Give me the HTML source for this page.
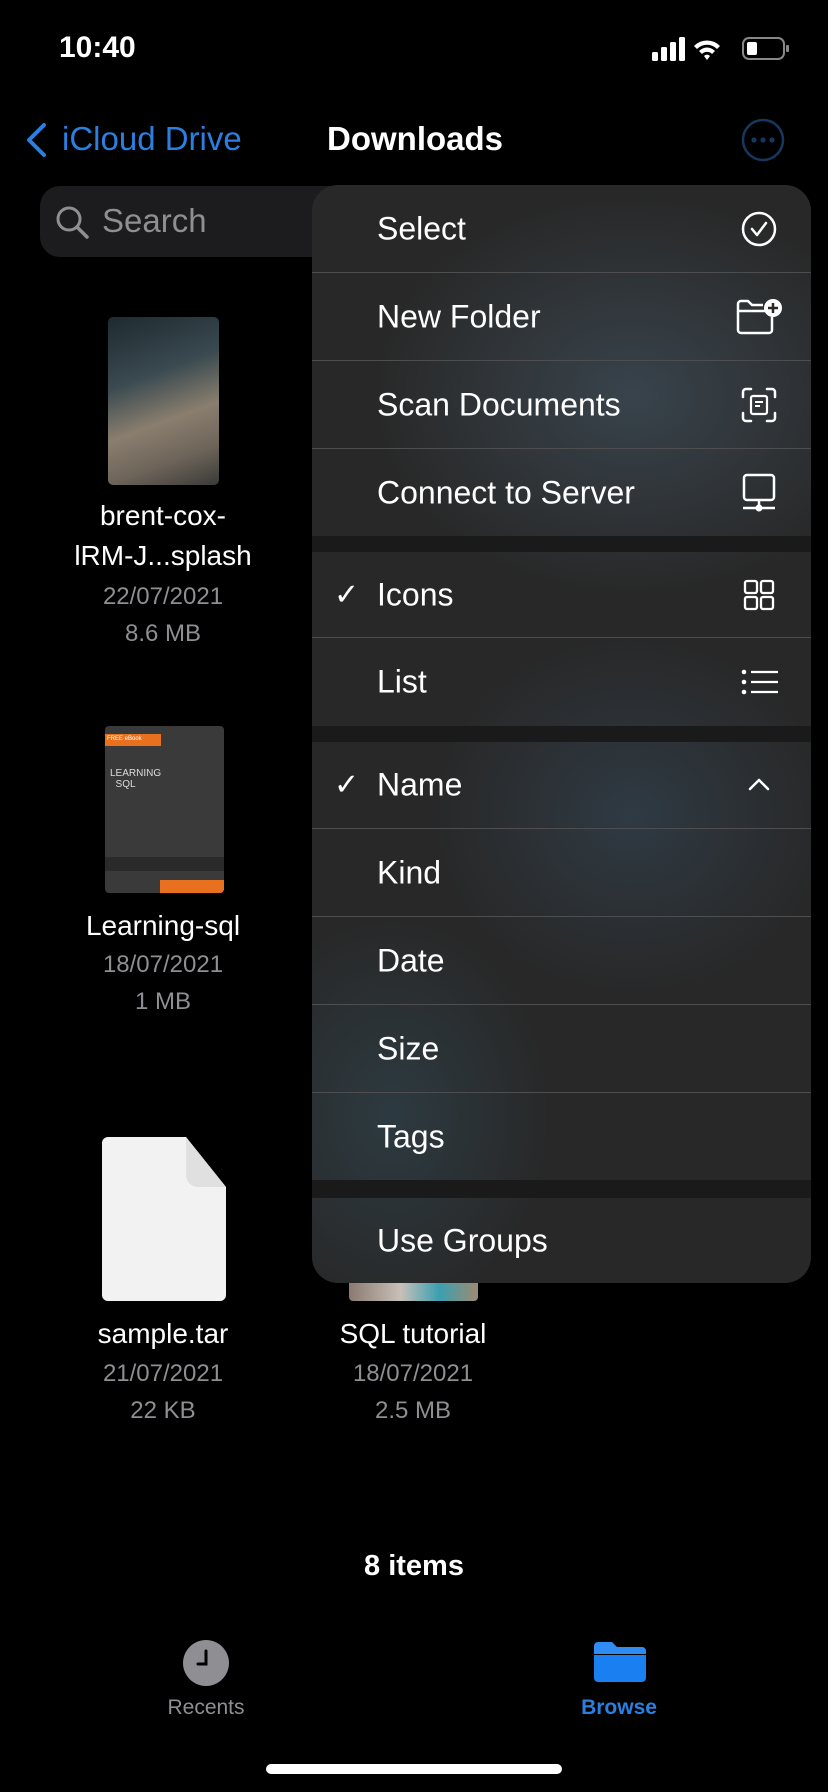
<!DOCTYPE html>
<html><head><meta charset="utf-8"><style>
*{margin:0;padding:0;box-sizing:border-box}
body{width:828px;height:1792px;background:#000;font-family:"Liberation Sans",sans-serif;color:#fff;position:relative;overflow:hidden}
.a{position:absolute}
.c{text-align:center;white-space:nowrap}
.fn{font-size:28px;color:#fff;width:260px}
.fm{font-size:24px;color:#8e8e93;width:260px}
.menu{left:312px;top:185px;width:499px;height:1098px;border-radius:26px;overflow:hidden;background:radial-gradient(ellipse 260px 200px at 320px 210px,rgba(70,90,105,.55),transparent),radial-gradient(ellipse 200px 180px at 320px 630px,rgba(55,80,100,.45),transparent),radial-gradient(ellipse 160px 200px at 80px 930px,rgba(50,80,95,.45),transparent),#282828}
.row{position:absolute;left:0;width:499px;border-bottom:1px solid #4e4e50}
.row span{position:absolute;left:65px;font-size:32px;top:50%;transform:translateY(-50%)}
.gap{position:absolute;left:0;width:499px;background:#1a1a1a}
.ic{position:absolute;left:428px;top:50%;transform:translateY(-50%)}
.row span.ck{left:22px;font-size:30px}
</style></head><body>
<div class="a" style="left:59px;top:31px;font-size:30px;font-weight:bold">10:40</div>
<svg class="a" style="left:652px;top:36px" width="140" height="26" viewBox="0 0 140 26">
<rect x="0" y="16" width="6" height="9" rx="1.5" fill="#fff"/><rect x="9" y="11" width="6" height="14" rx="1.5" fill="#fff"/><rect x="18" y="6" width="6" height="19" rx="1.5" fill="#fff"/><rect x="27" y="1" width="6" height="24" rx="1.5" fill="#fff"/>
<path d="M42 10a18 18 0 0 1 26 0l-3 3a14 14 0 0 0-20 0zM47 15a11 11 0 0 1 16 0l-3 3a7 7 0 0 0-10 0zM52 20a4 4 0 0 1 6 0l-3 4z" fill="#fff"/>
<rect x="91" y="2" width="41" height="21" rx="6" fill="none" stroke="#888" stroke-width="2"/><rect x="95" y="6" width="10" height="13" rx="2" fill="#fff"/><rect x="134" y="9" width="3" height="7" rx="1" fill="#888"/>
</svg>
<svg class="a" style="left:24px;top:122px" width="24" height="36"><path d="M20 3L5 18l15 15" fill="none" stroke="#2a7fe0" stroke-width="4" stroke-linecap="round" stroke-linejoin="round"/></svg>
<div class="a" style="left:62px;top:120px;font-size:33px;color:#2a7fe0">iCloud Drive</div>
<div class="a" style="left:327px;top:120px;font-size:33px;font-weight:bold">Downloads</div>
<svg class="a" style="left:741px;top:118px" width="44" height="44"><circle cx="22" cy="22" r="20" fill="none" stroke="#16385e" stroke-width="2.5"/><circle cx="13" cy="22" r="2.6" fill="#16385e"/><circle cx="22" cy="22" r="2.6" fill="#16385e"/><circle cx="31" cy="22" r="2.6" fill="#16385e"/></svg>
<div class="a" style="left:40px;top:186px;width:320px;height:71px;border-radius:20px;background:#1c1c1e"></div>
<svg class="a" style="left:54px;top:204px" width="38" height="38"><circle cx="15" cy="15" r="11" fill="none" stroke="#8e8e93" stroke-width="3"/><path d="M23 23l10 10" stroke="#8e8e93" stroke-width="3.5" stroke-linecap="round"/></svg>
<div class="a" style="left:102px;top:202px;font-size:33px;color:#8e8e93">Search</div>

<div class="a" style="left:108px;top:317px;width:111px;height:168px;border-radius:5px;background:linear-gradient(160deg,#1e2a30 0%,#3a4a50 35%,#8a7e6e 60%,#6e655a 80%,#3a3a38 100%)"></div>
<div class="a c fn" style="left:33px;top:500px">brent-cox-</div>
<div class="a c fn" style="left:33px;top:540px">lRM-J...splash</div>
<div class="a c fm" style="left:33px;top:583px">22/07/2021</div>
<div class="a c fm" style="left:33px;top:620px">8.6 MB</div>

<div class="a" style="left:105px;top:726px;width:119px;height:167px;border-radius:4px;background:#3a3a3a;overflow:hidden">
<div class="a" style="left:0;top:8px;width:56px;height:12px;background:#e8701e;font-size:6px;padding:2px">FREE eBook</div>
<div class="a" style="left:5px;top:42px;font-size:10px;color:#ddd">LEARNING<br>&nbsp;&nbsp;SQL</div>
<div class="a" style="left:0;top:131px;width:119px;height:14px;background:#2a2a2a"></div>
<div class="a" style="left:55px;top:154px;width:64px;height:13px;background:#e8701e"></div>
</div>
<div class="a c fn" style="left:33px;top:910px">Learning-sql</div>
<div class="a c fm" style="left:33px;top:951px">18/07/2021</div>
<div class="a c fm" style="left:33px;top:988px">1 MB</div>

<svg class="a" style="left:102px;top:1137px" width="124" height="164"><path d="M6 0H84L124 50V158a6 6 0 0 1-6 6H6a6 6 0 0 1-6-6V6a6 6 0 0 1 6-6z" fill="#f2f2f2"/><path d="M84 0V38a12 12 0 0 0 12 12H124z" fill="#e0e0e0"/></svg>
<div class="a c fn" style="left:33px;top:1318px">sample.tar</div>
<div class="a c fm" style="left:33px;top:1360px">21/07/2021</div>
<div class="a c fm" style="left:33px;top:1397px">22 KB</div>

<div class="a" style="left:349px;top:1270px;width:129px;height:31px;border-radius:4px;background:linear-gradient(90deg,#8a7a70,#c8c0b8 40%,#3aa0b0 70%,#a08a70)"></div>
<div class="a c fn" style="left:283px;top:1318px">SQL tutorial</div>
<div class="a c fm" style="left:283px;top:1360px">18/07/2021</div>
<div class="a c fm" style="left:283px;top:1397px">2.5 MB</div>

<div class="a menu">
<div class="row" style="top:0;height:88px"><span>Select</span><svg class="ic" width="38" height="38"><circle cx="19" cy="19" r="16" fill="none" stroke="#fff" stroke-width="2.5"/><path d="M12 19l5 6 9-12" fill="none" stroke="#fff" stroke-width="2.5" stroke-linecap="round" stroke-linejoin="round"/></svg></div>
<div class="row" style="top:88px;height:88px"><span>New Folder</span><svg class="ic" style="left:423px" width="48" height="40"><path d="M3 12V33a3 3 0 0 0 3 3H34a3 3 0 0 0 3-3V20M3 12V7a3 3 0 0 1 3-3H13l4 4H28M3 14H30" fill="none" stroke="#fff" stroke-width="2.5" stroke-linejoin="round"/><circle cx="38" cy="11" r="9" fill="#fff"/><path d="M38 6v10M33 11h10" stroke="#282828" stroke-width="2.5"/></svg></div>
<div class="row" style="top:176px;height:88px"><span>Scan Documents</span><svg class="ic" width="38" height="38"><path d="M3 11V6a3 3 0 0 1 3-3h5M27 3h5a3 3 0 0 1 3 3v5M35 27v5a3 3 0 0 1-3 3h-5M11 35H6a3 3 0 0 1-3-3v-5" fill="none" stroke="#fff" stroke-width="2.5" stroke-linecap="round"/><rect x="11" y="10" width="16" height="18" rx="2" fill="none" stroke="#fff" stroke-width="2.2"/><path d="M15 16h8M15 20h5" stroke="#fff" stroke-width="2"/></svg></div>
<div class="row" style="top:264px;height:87px;border:none"><span>Connect to Server</span><svg class="ic" width="38" height="40"><rect x="4" y="2" width="30" height="25" rx="3" fill="none" stroke="#fff" stroke-width="2.5"/><path d="M19 27v8M3 35h32" stroke="#fff" stroke-width="2.5"/><circle cx="19" cy="35" r="3.5" fill="#fff"/></svg></div>
<div class="gap" style="top:351px;height:16px"></div>
<div class="row" style="top:367px;height:86px"><span class="ck">✓</span><span>Icons</span><svg class="ic" width="38" height="38"><rect x="5" y="5" width="12" height="12" rx="2" fill="none" stroke="#fff" stroke-width="2.3"/><rect x="21" y="5" width="12" height="12" rx="2" fill="none" stroke="#fff" stroke-width="2.3"/><rect x="5" y="21" width="12" height="12" rx="2" fill="none" stroke="#fff" stroke-width="2.3"/><rect x="21" y="21" width="12" height="12" rx="2" fill="none" stroke="#fff" stroke-width="2.3"/></svg></div>
<div class="row" style="top:453px;height:88px;border:none"><span>List</span><svg class="ic" width="40" height="38"><circle cx="4" cy="9" r="2.3" fill="#fff"/><circle cx="4" cy="19" r="2.3" fill="#fff"/><circle cx="4" cy="29" r="2.3" fill="#fff"/><path d="M11 9h27M11 19h27M11 29h27" stroke="#fff" stroke-width="2.3"/></svg></div>
<div class="gap" style="top:541px;height:16px"></div>
<div class="row" style="top:557px;height:87px"><span class="ck">✓</span><span>Name</span><svg class="ic" width="38" height="38"><path d="M10 23l9-9 9 9" fill="none" stroke="#fff" stroke-width="2.5" stroke-linecap="round" stroke-linejoin="round"/></svg></div>
<div class="row" style="top:644px;height:88px"><span>Kind</span></div>
<div class="row" style="top:732px;height:88px"><span>Date</span></div>
<div class="row" style="top:820px;height:88px"><span>Size</span></div>
<div class="row" style="top:908px;height:87px;border:none"><span>Tags</span></div>
<div class="gap" style="top:995px;height:18px"></div>
<div class="row" style="top:1013px;height:85px;border:none"><span>Use Groups</span></div>
</div>

<div class="a c" style="left:214px;top:1550px;width:400px;font-size:29px;font-weight:bold">8 items</div>
<svg class="a" style="left:182px;top:1639px" width="48" height="48"><circle cx="24" cy="24" r="23" fill="#8e8e93"/><path d="M24 12v13h-8" fill="none" stroke="#000" stroke-width="3" stroke-linecap="round"/></svg>
<div class="a c" style="left:106px;top:1696px;width:200px;font-size:21px;color:#8e8e93">Recents</div>
<svg class="a" style="left:592px;top:1640px" width="56" height="44"><path d="M2 6a4 4 0 0 1 4-4h14l5 5h25a4 4 0 0 1 4 4v3H2z" fill="#2f8cf5"/><path d="M2 15h52v23a4 4 0 0 1-4 4H6a4 4 0 0 1-4-4z" fill="#1a7ff0"/></svg>
<div class="a c" style="left:519px;top:1696px;width:200px;font-size:21px;color:#2a7fe0;font-weight:bold">Browse</div>
<div class="a" style="left:266px;top:1764px;width:296px;height:10px;border-radius:5px;background:#fff"></div>
</body></html>
